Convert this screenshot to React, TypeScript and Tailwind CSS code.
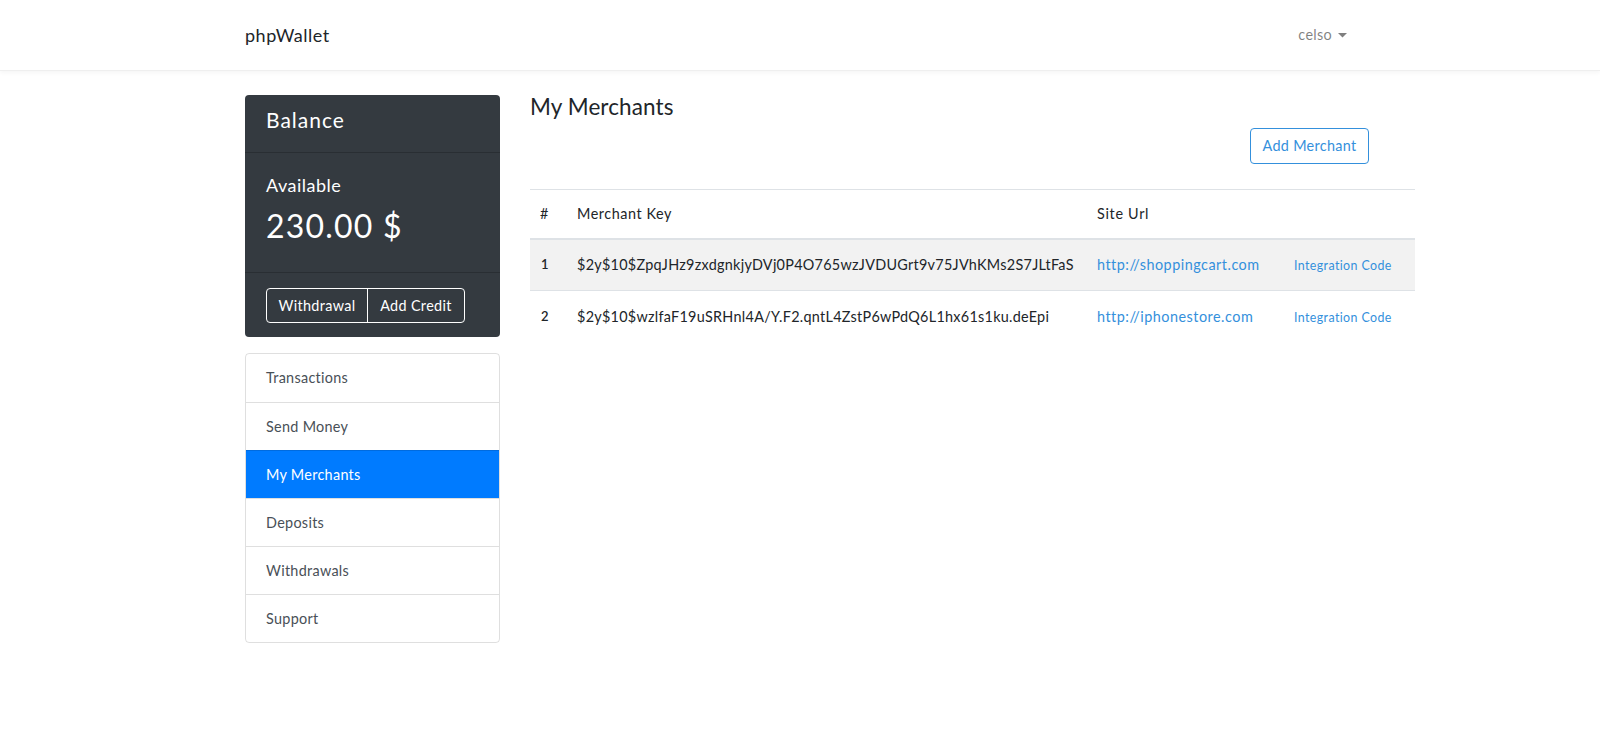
const MENU = ['Transactions', 'Send Money', 'My Merchants', 'Deposits', 'Withdrawals', 'Support'];

const MERCHANTS = [
  {
    id: 1,
    key: '$2y$10$ZpqJHz9zxdgnkjyDVj0P4O765wzJVDUGrt9v75JVhKMs2S7JLtFaS',
    url: 'http://shoppingcart.com',
  },
  {
    id: 2,
    key: '$2y$10$wzlfaF19uSRHnl4A/Y.F2.qntL4ZstP6wPdQ6L1hx61s1ku.deEpi',
    url: 'http://iphonestore.com',
  },
];

function Navbar() {
  return (
    <nav className="h-[71px] border-b border-[#efefef] bg-white shadow-[0_2px_4px_rgba(0,0,0,0.04)]">
      <div className="mx-auto flex h-full w-[1140px] items-center justify-between px-[15px]">
        <span className="text-[18px] tracking-[0.5px] text-[#212529]">phpWallet</span>
        <span className="mr-[8px] flex items-center gap-[6px] text-[14.4px] tracking-[0.3px] text-[rgba(0,0,0,0.5)]">
          celso
          <svg width="9" height="5" viewBox="0 0 9 5" className="mt-[1px]">
            <path d="M0 0h9L4.5 4.5z" fill="rgba(0,0,0,0.5)" />
          </svg>
        </span>
      </div>
    </nav>
  );
}

function BalanceCard() {
  return (
    <div className="overflow-hidden rounded-[4px] bg-[#343a40] text-white">
      <div className="h-[58px] border-b border-[rgba(0,0,0,0.2)] px-[21px] pt-[12px] text-[21px] leading-[26px] tracking-[1px]">
        Balance
      </div>
      <div className="h-[120px] border-b border-[rgba(0,0,0,0.2)] px-[21px] pt-[18px]">
        <div className="text-[18px] leading-[28px] tracking-[0.5px]">Available</div>
        <div className="mt-[7px] text-[32px] leading-[40px] tracking-[1.2px]">230.00 $</div>
      </div>
      <div className="h-[64px] px-[21px] pt-[15px]">
        <div className="inline-flex h-[35px] overflow-hidden rounded-[4px] border border-white text-[14.4px] tracking-[0.35px]">
          <button className="w-[101px] border-r border-white">Withdrawal</button>
          <button className="w-[96px]">Add Credit</button>
        </div>
      </div>
    </div>
  );
}

function SideMenu() {
  return (
    <div className="mt-[16px] overflow-hidden rounded-[4px] border border-[rgba(0,0,0,0.125)]">
      {MENU.map((m, i) => (
        <div
          key={m}
          className={`h-[48px] px-[20px] pt-[12px] text-[14.4px] tracking-[0.3px] ${
            i > 0 ? 'border-t border-[rgba(0,0,0,0.125)]' : 'h-[47px]'
          } ${m === 'My Merchants' ? 'bg-[#007bff] text-white' : 'text-[#495057]'}`}
        >
          {m}
        </div>
      ))}
    </div>
  );
}

function MerchantTable() {
  const head = 'h-[49px] border-t border-b-2 border-[#dee2e6] font-normal';
  return (
    <table className="mt-[25px] w-[885px] table-fixed border-collapse text-left text-[14.4px] text-[#212529]">
      <colgroup>
        <col className="w-[35px]" />
        <col className="w-[520px]" />
        <col className="w-[197px]" />
        <col className="w-[133px]" />
      </colgroup>
      <thead>
        <tr>
          <th className={`${head} pl-[10px]`}>#</th>
          <th className={`${head} pl-[12px] tracking-[0.55px]`}>Merchant Key</th>
          <th className={`${head} pl-[12px] tracking-[0.7px]`}>Site Url</th>
          <th className={head}></th>
        </tr>
      </thead>
      <tbody>
        {MERCHANTS.map((r, i) => {
          const cell = `h-[52px] ${i > 0 ? 'border-t border-[#dee2e6]' : ''}`;
          return (
            <tr key={r.id} className={i === 0 ? 'bg-[#f2f2f2]' : ''}>
              <td className={`${cell} pl-[11px] text-[13px] font-semibold`}>{r.id}</td>
              <td className={`${cell} whitespace-nowrap pl-[12px] tracking-[0.28px]`}>{r.key}</td>
              <td className={`${cell} pl-[12px] tracking-[0.5px] text-[#3490dc]`}>{r.url}</td>
              <td className={`${cell} pl-[12px] pt-[3px] text-[12.4px] tracking-[0.4px] text-[#3490dc]`}>
                Integration Code
              </td>
            </tr>
          );
        })}
      </tbody>
    </table>
  );
}

export default function App() {
  return (
    <div className="min-h-[745px] bg-white font-['Lato',sans-serif] leading-[1.6]">
      <Navbar />
      <div className="mx-auto flex w-[1140px] gap-[30px] px-[15px] pt-[24px]">
        <aside className="w-[255px] shrink-0">
          <BalanceCard />
          <SideMenu />
        </aside>
        <main className="w-[825px] shrink-0">
          <h2 className="-mt-[2px] text-[22.5px] leading-[27px] tracking-[0.1px] text-[#212529]">My Merchants</h2>
          <div className="flex justify-end">
            <button className="-mr-[14px] mt-[8px] h-[36px] w-[119px] rounded-[4px] border border-[#3490dc] text-[14.4px] tracking-[0.3px] text-[#3490dc]">
              Add Merchant
            </button>
          </div>
          <MerchantTable />
        </main>
      </div>
    </div>
  );
}
